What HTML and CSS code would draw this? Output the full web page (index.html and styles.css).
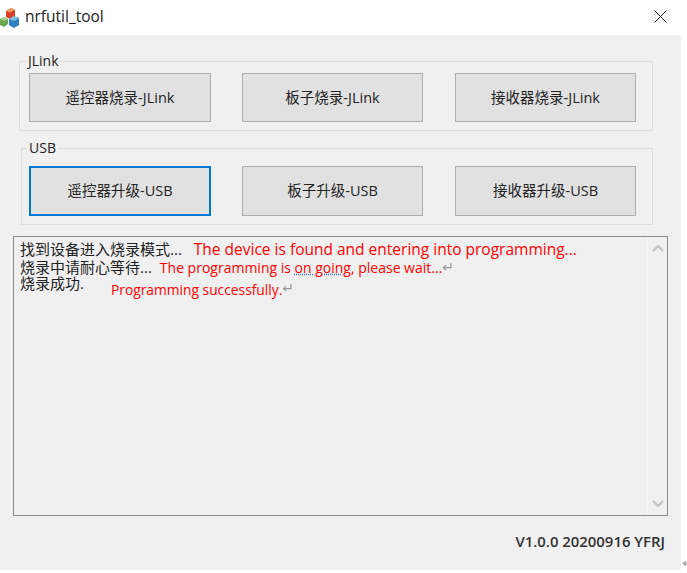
FILE: index.html
```html
<!DOCTYPE html>
<html lang="zh">
<head>
    <meta charset="UTF-8">
    <title>nrfutil_tool</title>
    <link rel="stylesheet" href="styles.css">
</head>
<body>
    <div class="window">
        <div class="titlebar">
            <svg class="app-icon" width="20" height="20" viewBox="0 0 20 20">
                <path d="M6 3l5-3 4 2v6l-5 3-4-2z" fill="#d9412a"/>
                <path d="M6 3l5-3 4 2-5 2.500z" fill="#ee9a62"/>
                <path d="M0 11l4-2 4 2v5l-4 3-4-2z" fill="#6aa552"/>
                <path d="M0 11l4-2 4 2-4 2z" fill="#a9cf8e"/>
                <path d="M9 11l5-3 5 2v7l-5 3-5-3z" fill="#2f7fbd"/>
                <path d="M9 11l5-3 5 2-5 3z" fill="#86bbe0"/>
            </svg>
            <span class="title">nrfutil_tool</span>
            <svg class="close" width="13" height="13" viewBox="0 0 13 13">
                <path d="M.5.5l12 12M12.5.5l-12 12" stroke="#222" stroke-width="1" fill="none"/>
            </svg>
        </div>
        <div class="client">
            <fieldset class="group group-jlink">
                <legend>JLink</legend>
                <div class="buttons">
                    <button>遥控器烧录-JLink</button>
                    <button>板子烧录-JLink</button>
                    <button>接收器烧录-JLink</button>
                </div>
            </fieldset>
            <fieldset class="group group-usb">
                <legend>USB</legend>
                <div class="buttons">
                    <button class="focused">遥控器升级-USB</button>
                    <button>板子升级-USB</button>
                    <button>接收器升级-USB</button>
                </div>
            </fieldset>
            <div class="log">
                <div class="log-text">
                    <div class="line"><span class="cn">找到设备进入烧录模式...</span><span class="en en1">The device is found and entering into programming...</span></div>
                    <div class="line"><span class="cn">烧录中请耐心等待...</span><span class="en en2">The programming is <u>on going</u>, please wait...</span><span class="ret">↵</span></div>
                    <div class="line line3"><span class="cn">烧录成功.</span><span class="en en3">Programming successfully.</span><span class="ret ret3">↵</span></div>
                </div>
                <div class="scrollbar">
                    <svg width="12" height="7" viewBox="0 0 12 7"><path d="M1 6l5-5 5 5" stroke="#c0c0c0" stroke-width="2" fill="none"/></svg>
                    <svg width="12" height="7" viewBox="0 0 12 7"><path d="M1 1l5 5 5-5" stroke="#c0c0c0" stroke-width="2" fill="none"/></svg>
                </div>
            </div>
            <div class="version">V1.0.0 20200916 YFRJ</div>
        </div>
    </div>
    <svg class="stray" width="5" height="7" viewBox="0 0 5 7"><path d="M0 3.500l4-3v2h1v2h-1v2z" fill="#aaa"/></svg>
</body>
</html>
```
FILE: styles.css
```css
html, body {
    margin: 0;
    padding: 0;
    background: white;
}
body {
    position: relative;
    width: 687px;
    height: 573px;
    overflow: hidden;
    font-family: "Open Sans", "Noto Sans CJK SC", sans-serif;
    color: #222;
}
.window {
    width: 681px;
}
.titlebar {
    height: 35px;
    display: flex;
    align-items: center;
    background: white;
}
.app-icon {
    margin-right: 5px;
    margin-top: 1px;
}
.title {
    font-size: 15.5px;
    color: #222;
    margin-top: -4px;
}
.close {
    margin-left: auto;
    margin-right: 14px;
    margin-top: -3px;
}
.client {
    background: #f0f0f0;
    height: 535px;
    padding: 17px 0 0 19px;
    box-sizing: border-box;
}
.group {
    margin: 0;
    padding: 0 0 8px 9px;
    border: 1px solid #dcdcdc;
    width: 634px;
    box-sizing: border-box;
}
.group legend {
    padding: 0 2px;
    margin-left: -3px;
    font-size: 14px;
    line-height: 18px;
}
.group-usb {
    margin-top: 8px;
    margin-left: 2px;
    width: 632px;
    padding-left: 7px;
}
.group-usb legend {
    margin-left: -2px;
}
.buttons {
    display: flex;
    gap: 32px;
    margin-top: 3px;
}
.group-usb .buttons {
    margin-top: 9px;
}
button {
    width: 181px;
    height: 49px;
    background: #e1e1e1;
    border: 1px solid #adadad;
    padding: 0 0 2px;
    font-family: "Open Sans", "Noto Sans CJK SC", sans-serif;
    font-size: 14.5px;
    color: #222;
}
button:first-child {
    width: 182px;
    margin-right: -1px;
}
.group-usb button {
    height: 50px;
    padding-bottom: 3px;
}
button.focused {
    border: 2px solid #0078d7;
}
.log {
    display: flex;
    width: 655px;
    height: 280px;
    margin: 11px 0 0 -6px;
    border: 1px solid #8a8a8a;
    box-sizing: border-box;
}
.log-text {
    flex: 1;
    padding: 2px 0 0 6px;
    font-size: 15px;
}
.line {
    display: flex;
    align-items: flex-start;
    height: 17.5px;
    line-height: 20px;
    white-space: nowrap;
}
.line3 {
    margin-top: -1px;
}
.en {
    color: #f00;
}
.en1 {
    font-size: 15.5px;
    margin-left: 12px;
}
.en2 {
    font-size: 14px;
    margin-left: 8px;
    margin-top: 1px;
}
.en3 {
    font-size: 13.8px;
    margin-left: 27px;
    margin-top: 7px;
}
.en u {
    text-decoration: underline dotted #3a6fd8;
}
.ret {
    color: #999;
    font-size: 14px;
    font-family: "DejaVu Sans", sans-serif;
}
.ret3 {
    margin-top: 5px;
}
.scrollbar {
    width: 20px;
    border-left: 1px solid #f7f7f7;
    display: flex;
    flex-direction: column;
    justify-content: space-between;
    align-items: center;
    padding: 8px 0;
    box-sizing: border-box;
}
.version {
    text-align: right;
    margin: 15px 16px 0 0;
    font-size: 14.9px;
    font-weight: 600;
    color: #333;
}
/* bit of an arrow glyph sitting outside the window edge */
.stray {
    position: absolute;
    left: 682px;
    top: 560px;
}
```
